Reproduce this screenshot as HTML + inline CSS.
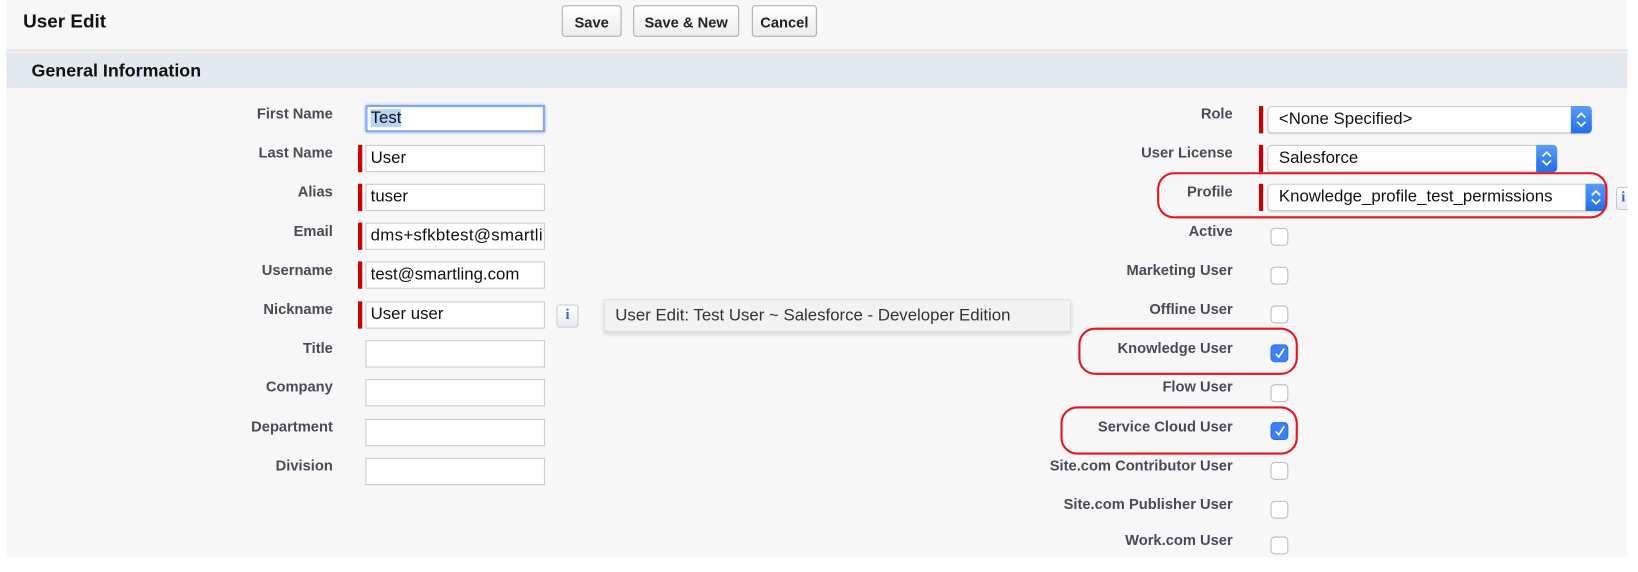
<!DOCTYPE html>
<html><head><style>
html,body{margin:0;padding:0;background:#fff;width:1638px;height:572px;overflow:hidden}
#w{position:absolute;left:0;top:0;width:1560px;height:545px;transform:scale(1.05);transform-origin:0 0;font-family:"Liberation Sans",Arial,sans-serif}
#bg{position:absolute;left:6px;top:0;width:1544px;height:531px;background:#f7f7f7}
.a{position:absolute}
.t{font-weight:bold;font-size:18px;color:#111}
.btn{position:absolute;top:5px;height:30px;border:1px solid #aaa;border-radius:3px;background:linear-gradient(#fff,#ececec);font-weight:bold;font-size:14px;color:#222;text-align:center;line-height:30px;box-sizing:border-box}
.lab{position:absolute;font-weight:bold;font-size:14px;color:#4a4a56;text-align:right}
.ll{right:1243px}
.rl{right:386px}
.in{position:absolute;left:348px;width:171px;height:26px;background:#fff;border:1px solid #c9c9c9;box-sizing:border-box;font-size:16px;line-height:24px;padding-left:4px;color:#111;overflow:hidden;white-space:nowrap}
.req{position:absolute;width:4px;height:26px;background:#c00}
.sel{position:absolute;left:1207px;height:26px;background:#fff;border:1px solid #ccc;border-radius:4px;box-sizing:border-box;font-size:16px;line-height:24px;padding-left:10px;color:#111;box-shadow:0 1px 1px rgba(0,0,0,.1)}
.arr{position:absolute;right:-1px;top:-1px;width:20px;height:26px;background:linear-gradient(#5a9cf8,#1f6fe6);border-radius:0 4px 4px 0}
.arr svg{position:absolute;left:4px;top:5px}
.cb{position:absolute;left:1210px;width:17px;height:17px;border:1px solid #bbb;border-radius:4px;background:#fff;box-sizing:border-box}
.cb.on{background:#3b82f6;border-color:#2f6ee0}
.oval{position:absolute;border:2px solid #e8141b;border-radius:16px;box-sizing:border-box}
.info{position:absolute;width:21px;height:22px;border:1px solid #c6c9d0;border-radius:3px;background:linear-gradient(#fff,#e8ebf0);box-sizing:border-box;color:#2a6dd2;font-family:"Liberation Serif",serif;font-weight:bold;font-size:14px;text-align:center;line-height:20px}
</style></head><body><div id="w">
<div id="bg"></div>
<div class="a t" style="left:22px;top:10px">User Edit</div>
<div class="btn" style="left:535px;width:57px">Save</div>
<div class="btn" style="left:603px;width:101px">Save &amp; New</div>
<div class="btn" style="left:716px;width:62px">Cancel</div>
<div class="a" style="left:6px;top:47px;width:1544px;height:2px;background:#e2e2e2"></div>
<div class="a" style="left:6px;top:50px;width:1544px;height:34px;background:#e3e7ee"></div>
<div class="a" style="left:30px;top:58px;font-weight:bold;font-size:17px;color:#111">General Information</div>

<div class="lab ll" style="top:100px">First Name</div>
<div class="lab ll" style="top:137px">Last Name</div>
<div class="lab ll" style="top:174px">Alias</div>
<div class="lab ll" style="top:212px">Email</div>
<div class="lab ll" style="top:249px">Username</div>
<div class="lab ll" style="top:286px">Nickname</div>
<div class="lab ll" style="top:323px">Title</div>
<div class="lab ll" style="top:360px">Company</div>
<div class="lab ll" style="top:398px">Department</div>
<div class="lab ll" style="top:435px">Division</div>

<div class="in" style="top:100px;border:2px solid #7fa9e8;box-shadow:0 0 3px #6b9ee8;padding-left:3px;line-height:22px"><span style="background:#b3d3fb">Test</span></div>
<div class="req" style="left:341px;top:138px"></div><div class="in" style="top:138px">User</div>
<div class="req" style="left:341px;top:175px"></div><div class="in" style="top:175px">tuser</div>
<div class="req" style="left:341px;top:212px"></div><div class="in" style="top:212px;letter-spacing:0.3px">dms+sfkbtest@smartling.com</div>
<div class="req" style="left:341px;top:249px"></div><div class="in" style="top:249px">test@smartling.com</div>
<div class="req" style="left:341px;top:287px"></div><div class="in" style="top:287px">User user</div>
<div class="in" style="top:324px"></div>
<div class="in" style="top:361px"></div>
<div class="in" style="top:399px"></div>
<div class="in" style="top:436px"></div>
<div class="info" style="left:530px;top:290px">i</div>
<div class="a" style="left:575px;top:285px;width:445px;height:31px;background:#f2f2f2;border:1px solid #ddd;box-shadow:0 2px 4px rgba(0,0,0,.15);box-sizing:border-box;font-size:16px;color:#333;line-height:29px;padding-left:10px">User Edit: Test User ~ Salesforce - Developer Edition</div>

<div class="lab rl" style="top:100px">Role</div>
<div class="lab rl" style="top:137px">User License</div>
<div class="lab rl" style="top:174px">Profile</div>
<div class="lab rl" style="top:212px">Active</div>
<div class="lab rl" style="top:249px">Marketing User</div>
<div class="lab rl" style="top:286px">Offline User</div>
<div class="lab rl" style="top:323px">Knowledge User</div>
<div class="lab rl" style="top:360px">Flow User</div>
<div class="lab rl" style="top:398px">Service Cloud User</div>
<div class="lab rl" style="top:435px">Site.com Contributor User</div>
<div class="lab rl" style="top:472px">Site.com Publisher User</div>
<div class="lab rl" style="top:506px">Work.com User</div>

<div class="req" style="left:1199px;top:101px"></div>
<div class="sel" style="top:101px;width:309px">&lt;None Specified&gt;<div class="arr"><svg width="12" height="16"><path d="M2 6 L6 2 L10 6 M2 10 L6 14 L10 10" stroke="#fff" stroke-width="1.6" fill="none"/></svg></div></div>
<div class="req" style="left:1199px;top:138px"></div>
<div class="sel" style="top:138px;width:276px">Salesforce<div class="arr"><svg width="12" height="16"><path d="M2 6 L6 2 L10 6 M2 10 L6 14 L10 10" stroke="#fff" stroke-width="1.6" fill="none"/></svg></div></div>
<div class="req" style="left:1199px;top:175px"></div>
<div class="sel" style="top:175px;width:323px">Knowledge_profile_test_permissions<div class="arr"><svg width="12" height="16"><path d="M2 6 L6 2 L10 6 M2 10 L6 14 L10 10" stroke="#fff" stroke-width="1.6" fill="none"/></svg></div></div>
<div class="info" style="left:1539px;top:178px;width:11px;border-right:none;border-radius:3px 0 0 3px;text-align:left;padding-left:4px">i</div>

<div class="cb" style="top:217px"></div>
<div class="cb" style="top:254px"></div>
<div class="cb" style="top:291px"></div>
<div class="cb on" style="top:328px"><svg width="15" height="15" style="position:absolute;left:0;top:0"><path d="M4 8 L7 11 L12 3" stroke="#fff" stroke-width="1.6" fill="none"/></svg></div>
<div class="cb" style="top:366px"></div>
<div class="cb on" style="top:402px"><svg width="15" height="15" style="position:absolute;left:0;top:0"><path d="M4 8 L7 11 L12 3" stroke="#fff" stroke-width="1.6" fill="none"/></svg></div>
<div class="cb" style="top:440px"></div>
<div class="cb" style="top:477px"></div>
<div class="cb" style="top:511px"></div>

<div class="oval" style="left:1102px;top:164px;width:429px;height:44px"></div>
<div class="oval" style="left:1027px;top:312px;width:209px;height:45px"></div>
<div class="oval" style="left:1010px;top:387px;width:226px;height:46px"></div>
</div></body></html>
